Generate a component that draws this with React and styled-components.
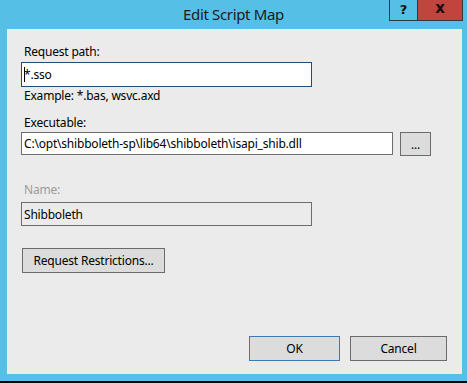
import styled, { createGlobalStyle } from "styled-components";

const GlobalStyle = createGlobalStyle`
  html, body {
    margin: 0;
    padding: 0;
    background: #000000;
  }
  body {
    font-family: "Noto Sans", "Open Sans", sans-serif;
    font-size: 12px;
    letter-spacing: -0.2px;
    color: #000000;
  }
`;

const Window = styled.div`
  width: 467px;
  height: 381px;
  background: #56bfe6;
  display: flex;
  flex-direction: column;
`;

const TitleBar = styled.div`
  height: 29px;
  display: grid;
  grid-template-columns: 1fr auto 1fr;
  align-items: start;
`;

const Title = styled.div`
  grid-column: 2;
  font-size: 15px;
  letter-spacing: -0.35px;
  line-height: 20px;
  padding-top: 4px;
  color: #1a1a1a;
`;

const Controls = styled.div`
  grid-column: 3;
  justify-self: end;
  display: flex;
  margin-right: 4px;
  border: 1px solid #2d3a44;
  border-top: none;
`;

const CaptionButton = styled.div`
  width: ${(p) => p.$w}px;
  height: 20px;
  display: flex;
  align-items: center;
  justify-content: center;
  background: ${(p) => (p.$close ? "#c0453c" : "#56bfe6")};
  border-left: ${(p) => (p.$close ? "1px solid #2d3a44" : "none")};
  font-family: "DejaVu Sans", sans-serif;
  font-weight: bold;
  font-size: ${(p) => (p.$close ? 15 : 13)}px;
  letter-spacing: 0;
  line-height: 1;
  padding-bottom: ${(p) => (p.$close ? 3 : 1)}px;
  box-sizing: border-box;
  color: #111111;
`;

const Client = styled.div`
  flex: 1;
  margin: 0 5px 7px 7px;
  background: #ebebeb;
  padding: 15px 15px 13px 14px;
  display: flex;
  flex-direction: column;
`;

const Label = styled.div`
  line-height: 16px;
  margin-left: 3px;
  color: ${(p) => (p.$disabled ? "#9b9b9b" : "#000000")};
  margin-top: ${(p) => p.$top || 0}px;
`;

const Field = styled.div`
  width: ${(p) => p.$w}px;
  height: ${(p) => p.$h || 23}px;
  box-sizing: border-box;
  border: 1px solid ${(p) => (p.$focus ? "#244a77" : "#6e6e6e")};
  background: ${(p) => (p.$disabled ? "#ebebeb" : "#ffffff")};
  padding-left: 2px;
  display: flex;
  align-items: center;
  white-space: nowrap;
  overflow: hidden;
  margin-top: ${(p) => p.$top || 0}px;
`;

const Caret = styled.span`
  display: inline-block;
  width: 1px;
  height: 15px;
  background: #000000;
  margin-right: -1px;
`;

const Row = styled.div`
  display: flex;
  gap: 7px;
  margin-top: ${(p) => p.$top || 0}px;
`;

const Button = styled.div`
  width: ${(p) => p.$w}px;
  height: ${(p) => p.$h || 25}px;
  box-sizing: border-box;
  border: 1px solid ${(p) => (p.$default ? "#3c7ab5" : "#6b6b6b")};
  background: #dcdcdc;
  display: flex;
  align-items: center;
  justify-content: center;
  margin-left: ${(p) => p.$left || 0}px;
  margin-top: ${(p) => p.$top || 0}px;
`;

const Footer = styled.div`
  margin-top: auto;
  display: flex;
  justify-content: flex-end;
  gap: 10px;
`;

export default function App() {
  return (
    <>
      <GlobalStyle />
      <Window>
        <TitleBar>
          <Title>Edit Script Map</Title>
          <Controls>
            <CaptionButton $w={27}>?</CaptionButton>
            <CaptionButton $w={45} $close>
              x
            </CaptionButton>
          </Controls>
        </TitleBar>
        <Client>
          <Label>Request path:</Label>
          <Field $w={291} $h={25} $top={2} $focus>
            <Caret />
            *.sso
          </Field>
          <Label $top={1}>Example: *.bas, wsvc.axd</Label>
          <Label $top={11}>Executable:</Label>
          <Row $top={1}>
            <Field $w={372}>C:\opt\shibboleth-sp\lib64\shibboleth\isapi_shib.dll</Field>
            <Button $w={31} $h={24}>...</Button>
          </Row>
          <Label $disabled $top={26}>Name:</Label>
          <Field $w={291} $h={24} $top={4} $disabled>
            Shibboleth
          </Field>
          <Button $w={143} $left={1} $top={22}>
            Request Restrictions...
          </Button>
          <Footer>
            <Button $w={91} $default>OK</Button>
            <Button $w={97}>Cancel</Button>
          </Footer>
        </Client>
      </Window>
    </>
  );
}
